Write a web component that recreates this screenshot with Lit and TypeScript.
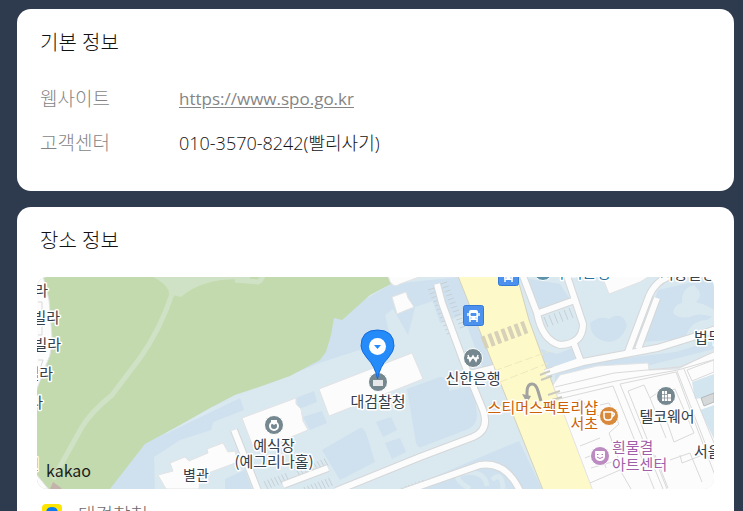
import { LitElement, html, css, svg } from "lit";
import { customElement } from "lit/decorators.js";

interface MapLabel {
  x: number;
  y: number;
  text: string;
  tone?: string;
  anchor?: string;
}

const LABELS: MapLabel[] = [
  { x: 48, y: 296, text: "빌라", anchor: "end" },
  { x: 60, y: 323, text: "빌라", anchor: "end" },
  { x: 61, y: 350, text: "빌라", anchor: "end" },
  { x: 53, y: 379, text: "빌라", anchor: "end" },
  { x: 43, y: 408, text: "빌라", anchor: "end" },
  { x: 39, y: 470, text: "원", anchor: "end" },
  { x: 196, y: 480, text: "별관", tone: "small" },
  { x: 274, y: 451, text: "예식장" },
  { x: 274, y: 467, text: "(예그리나홀)" },
  { x: 378, y: 407, text: "대검찰청" },
  { x: 473, y: 384, text: "신한은행" },
  { x: 598, y: 413, text: "스티머스팩토리샵", tone: "food", anchor: "end" },
  { x: 598, y: 429, text: "서초", tone: "food", anchor: "end" },
  { x: 667, y: 422, text: "텔코웨어" },
  { x: 612, y: 453, text: "흰물결", tone: "art", anchor: "start" },
  { x: 612, y: 470, text: "아트센터", tone: "art", anchor: "start" },
  { x: 694, y: 343, text: "법무사", anchor: "start" },
  { x: 694, y: 457, text: "서울", anchor: "start" },
  { x: 555, y: 278, text: "우리은행", tone: "bank", anchor: "start" },
  { x: 660, y: 279, text: "서광빌딩", anchor: "start" },
];

const ROADS = [
  "M437 284L442 303L463 360L474 388L483 410Q490 430 473 437L420 457L336 491",
  "M403 492L480 465Q506 461 520 491",
  "M523 276L537 313Q542 340 560 345Q583 344 583 324L575 300L567 276",
  "M536 314L575 300",
  "M573 341L581 362",
  "M545 373L583 362L657 348L690 338L716 329",
  "M628 352L649 296Q655 282 668 277",
  "M638 349L657 298",
  "M470 374L494 368",
  "M283 485L328 468",
  "M234 430L258 491",
];

const ticks = (x: number, y: number, dx: number, dy: number, n: number, lx: number, ly: number) =>
  Array.from({ length: n }, (_, i) => `M${x + dx * i} ${y + dy * i}l${lx} ${ly}`).join("");

const PARKING = [
  ticks(428, 290, 1.7, 4, 12, 6, -2),
  ticks(441, 284, 1.7, 4, 12, 6, -2),
  ticks(264, 481, 3.5, -1.3, 7, 4, 8),
  ticks(304, 487, 3.5, -1.3, 8, 4, 8),
  ticks(296, 469, 3.5, -1.3, 9, 4, 7),
  ticks(398, 489, 3.5, -1.3, 8, 3, 6),
  ticks(544, 317, 5, -1.8, 7, 4, 10),
].join("");

@customElement("place-map")
class PlaceMap extends LitElement {
  static styles = css`
    :host {
      display: block;
      border-radius: 10px;
      overflow: hidden;
    }
    .map {
      display: block;
      width: 100%;
      height: auto;
    }
    .label {
      font: 400 15px "Noto Sans CJK KR", sans-serif;
      fill: #36404a;
      stroke: #fff;
      stroke-width: 3px;
      stroke-linejoin: round;
      paint-order: stroke;
    }
    .small {
      font-size: 14px;
    }
    .food {
      fill: #cb6208;
    }
    .art {
      fill: #a05fa8;
    }
    .bank {
      fill: #2b6f9c;
    }
    .brand {
      font: 400 16px "Noto Sans CJK KR", sans-serif;
      fill: #1d1d1b;
      stroke: none;
    }
    .casing {
      fill: none;
      stroke: #d5d7d8;
      stroke-width: 8px;
    }
    .road {
      fill: none;
      stroke: #fcfcfc;
      stroke-width: 6px;
    }
    .pond {
      fill: #cfe1ee;
    }
    .block {
      fill: #fcfcfc;
      stroke: #e2e3e4;
    }
    .line {
      fill: none;
      stroke: #d9d9d9;
    }
    .parking {
      fill: none;
      stroke: #c6cfd4;
    }
    .walk {
      fill: none;
      stroke: #d0e2c5;
      stroke-width: 5px;
    }
    .trail {
      fill: none;
      stroke: #dae8ef;
      stroke-width: 5px;
    }
  `;

  render() {
    return html`
      <svg class="map" viewBox="37 277 677 212" role="img" aria-label="대검찰청 지도">
        <rect x="37" y="277" width="677" height="212" fill="#dae8f0" />

        <path class="pond" d="M110 489L145 444L210 408L262 386L320 360L334 318L391 284L460 277L505 382L485 374L463 315L440 323L433 301L415 307L408 335L393 309L385 315L391 340L322 362L240 395L178 421L110 489Z" />
        <path class="pond" d="M110 489L145 444L240 398L244 410L213 422L211 430L180 440L154 457L155 489Z" />
        <path class="pond" d="M407 389L448 374L449 391L474 385L477 415Q477 427 463 431L421 447Q419 449 416 443ZM376 422L391 417L397 430L383 437ZM385 443L400 438L406 452L392 459ZM296 398L314 391L317 402L299 409ZM303 417L322 411L327 423L310 430ZM225 479L245 470L252 489H225ZM322 450L360 428Q364 427 367 436L375 462L340 480L328 460Z" />
        <path class="pond" d="M405 489L519 441L542 489ZM518 277L560 284L572 302L538 310ZM590 323Q600 315 609 319Q622 310 627 325Q623 340 609 342Q591 340 590 323ZM658 290L714 277V315L707 320Q690 320 685 339L640 342ZM541 349L557 354L575 347L579 359L546 369ZM555 375L582 363L676 352L714 340V349L630 370L555 382Z" />
        <path d="M673 313Q674 304 682 303Q681 288 694 285Q705 295 696 302Q708 305 714 310V317Q698 312 690 317Q678 319 673 313Z" fill="#dae8f0" />
        <path class="trail" d="M183 484Q178 464 191 460Q227 449 214 444L248 431M433 332Q420 350 427 361Q440 379 450 374M470 489Q450 477 463 473Q485 470 487 486M492 480Q502 470 503 489" />

        <path d="M37 277H388L391 284L370 295L350 313L342 320L334 318L331 335L326 352L320 360L290 376L262 386L235 395L210 408L180 425L145 444L110 489H37Z" fill="#c3daaf" />
        <path d="M153 277H250V280Q205 276 181 297L169 294Q169 285 153 277Z" fill="#d0e2c5" />
        <path class="walk" d="M172 294Q160 330 140 358L112 395Q91 412 82 427L53 479M235 280L258 282Q262 280 263 275" />
        <path class="block" d="M36 276H43L49 300L52 337L50 355L44 370L38 386L36 392ZM36 474L50 491H36ZM388 276Q392 290 400 284L422 276Z" />
        <path class="line" d="M38 302h4v10h-4M38 315h4v20h-4M38 360h5l-4 12" />
        <path d="M50 489L53 482L60 487L62 489Z" fill="#c6b2ac" />

        <path d="M458 276H517L529 320L545 364L553 385L594 490H543L500 382Z" fill="#fdf9c9" stroke="#d4d1bd" />
        <path d="M483 343L526 327" stroke="#d6d1b8" stroke-width="13" stroke-dasharray="4 3" fill="none" />
        <path d="M494 371L550 351M500 382L548 363" stroke="#eee9bd" stroke-dasharray="8 3" fill="none" />

        <path class="block" d="M242 418L296 398V404L301 409L303 421L308 430L255 452ZM319 389L412 353L423 379L329 416ZM392 297L406 292L408 298L414 307L397 314ZM158 475L173 471L170 463L185 457L189 461L208 453L207 449L223 443L228 452L235 451L238 462L200 476L199 489H166ZM602 276L609 294L640 282L650 276ZM553 385L560 375L597 366L648 363L649 370L678 369L716 350V491H593Z" />
        <path d="M692 382L714 374V396L695 399ZM700 410L714 405V439Z" fill="#d3e5ef" />
        <path class="line" d="M555 387L614 373L680 367L716 351M557 394L616 381L678 370L716 359M559 399L613 386L655 491M620 384L663 489M628 391L644 385L650 398L660 391M628 391L667 489M677 371L712 461M684 369L716 448M620 384L676 372L692 415L716 478M570 403L582 399L590 414L618 419M600 405L609 403L619 424L609 433L621 466M580 446L600 438M591 468L612 462M585 458L600 452L606 468M660 393L675 389L694 433L674 442L664 413M650 398L666 438M670 460L690 453L702 482M655 455L668 488M680 455L682 463L700 456M687 370L714 360V372L692 381ZM590 483L620 470L631 489" />
        <path class="parking" d="${PARKING}" />
        ${ROADS.map((d) => svg`<path class="casing" d=${d} />`)}
        ${ROADS.map((d) => svg`<path class="road" d=${d} />`)}
        <path d="M550 372L582 362L579 358L553 367Z" fill="#fcfcfc" />
        <path d="M540 375L550 371M541 380L552 376M548 395L560 391M552 400L562 397" stroke="#cbcabe" stroke-width="2" />
        <path d="M701 398L714 393V402L704 406Z" fill="#d5d9da" stroke="#b4b9bb" />

        <path d="M527 396V392Q527 384 532 384Q536 384 538 391L541 401" fill="none" stroke="#a2a3a0" stroke-width="3" />
        <path d="M522 394L531 396L527 403Z" fill="#a2a3a0" />

        <g fill="#75878f" stroke="#fff">
          <circle cx="378" cy="382" r="9.5" />
          <circle cx="473" cy="358" r="9.5" />
          <circle cx="274" cy="425" r="9.5" />
          <circle cx="666" cy="396" r="9.5" />
          <circle cx="543" cy="271" r="9.5" fill="#5c92a9" />
          <circle cx="609" cy="416" r="9.5" fill="#d9893a" />
          <circle cx="600" cy="456" r="9.5" fill="#bb8bc1" />
        </g>
        <path d="M373 380h10v6h-10z" fill="#e5e7e8" />
        <path d="M468 355L470 361L473 356L476 361L478 355M467 358h12" fill="none" stroke="#fff" stroke-width="1.500" />
        <circle cx="274" cy="426" r="4" fill="none" stroke="#fff" stroke-width="2" />
        <path d="M271 420h6v3l-3 2l-3-2z" fill="#fff" />
        <path d="M662 391h5v3h4v7h-9z" fill="#fff" />
        <path d="M664.500 391v10M667.500 394v7M662 394.500h5M662 398h9" stroke="#75878f" stroke-width=".7" />
        <path d="M604 412h8v4q0 4-3 4h-2q-3 0-3-4zM612 413h1q2 0 1 2l-2 2" fill="none" stroke="#fff" stroke-width="1.500" />
        <path d="M595 452q0-1 1-1h8q1 0 1 1v5q-1 4-5 4t-5-4z" fill="#fff" />
        <path d="M597 454.500h1.500M601.500 454.500h1.500M597 457q3 3 6 0" fill="none" stroke="#b47bbb" />

        ${[
          [463, 305],
          [498, 265],
        ].map(
          ([x, y]) => svg`
            <g transform="translate(${x} ${y})">
              <rect x=".5" y=".5" width="20" height="20" rx="2" fill="#4b91ed" stroke="#347bd8" />
              <rect x="6" y="5" width="9" height="10" rx="2" fill="#fff" />
              <path d="M5 8v3M16 8v3M7 14v3M14 14v3" stroke="#fff" stroke-width="1.500" />
              <path d="M8 8.500h5v2h-5zM7.500 13h1M12.500 13h1" fill="#4b91ed" stroke="#4b91ed" />
            </g>
          `
        )}

        ${LABELS.map(
          (l) => svg`<text class="label ${l.tone ?? ""}" x=${l.x} y=${l.y} text-anchor=${l.anchor ?? "middle"}>${l.text}</text>`
        )}
        <text class="brand" x="46" y="477">kakao</text>

        <path d="M377.500 379Q375 366 367 358Q361 351 361 346Q361 330 377.500 330Q394 330 394 346Q394 351 388 358Q380 366 377.500 379Z" fill="#258bf8" stroke="#126bdc" />
        <circle cx="377.500" cy="346.500" r="8.500" fill="#fff" />
        <path d="M374 345h7l-3.500 4z" fill="#258bf8" />
      </svg>
    `;
  }
}

@customElement("app-root")
class AppRoot extends LitElement {
  static styles = css`
    :host {
      display: flex;
      flex-direction: column;
      gap: 16px;
      box-sizing: border-box;
      min-height: 100vh;
      padding: 9px 9px 16px 17px;
      background: #2e3b4e;
      color: #111;
      font: 300 19px/28px "Open Sans", "Noto Sans CJK KR", sans-serif;
    }
    .card {
      padding: 20px 20px 34px;
      border-radius: 14px;
      background: #fff;
    }
    .title {
      margin: 0;
      padding: 0 3px;
      font-size: 20px;
      font-weight: 300;
    }
    .info {
      display: grid;
      grid-template-columns: 139px 1fr;
      row-gap: 16px;
      margin: 28px 0 0;
      padding: 0 3px;
    }
    .term {
      color: #858585;
    }
    .value {
      display: flex;
      margin: 0;
      font-size: 18px;
    }
    .link {
      color: #858585;
      font-size: 17px;
      font-weight: 400;
      text-decoration: underline;
      text-underline-offset: 2px;
    }
    .map {
      margin-top: 22px;
    }
    .place {
      display: flex;
      gap: 16px;
      margin-top: 12px;
      padding: 0 5px;
      color: #6c6c6c;
    }
    .badge {
      width: 20px;
      height: 20px;
      margin-top: 3px;
    }
  `;

  render() {
    return html`
      <section class="card">
        <h2 class="title">기본 정보</h2>
        <dl class="info">
          <dt class="term">웹사이트</dt>
          <dd class="value"><a class="link" href="https://www.spo.go.kr">https://www.spo.go.kr</a></dd>
          <dt class="term">고객센터</dt>
          <dd class="value">010-3570-8242(빨리사기)</dd>
        </dl>
      </section>
      <section class="card">
        <h2 class="title">장소 정보</h2>
        <place-map class="map"></place-map>
        <div class="place">
          <svg class="badge" viewBox="0 0 20 20" aria-hidden="true">
            <rect width="20" height="20" rx="4" fill="#fee500" />
            <path d="M10 17Q4 12 4 9Q4 3 10 3Q16 3 16 9Q16 12 10 17Z" fill="#0b7bf4" />
            <circle cx="10" cy="9" r="2" fill="#fee500" />
          </svg>
          <span>대검찰청</span>
        </div>
      </section>
    `;
  }
}
